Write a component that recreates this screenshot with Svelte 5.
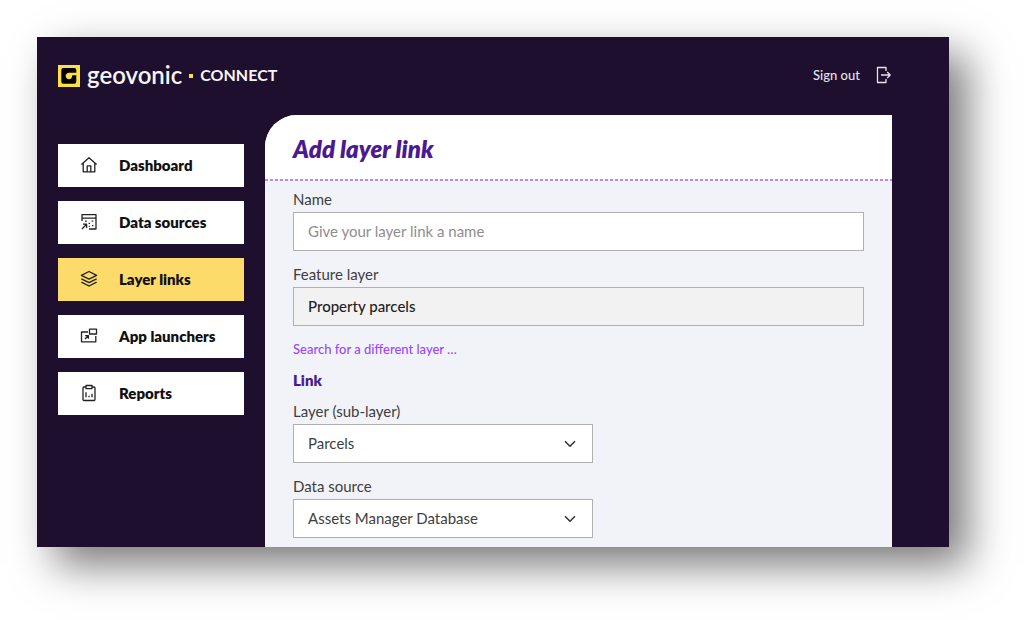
<script>
  const navItems = [
    { label: 'Dashboard', icon: 'home' },
    { label: 'Data sources', icon: 'data' },
    { label: 'Layer links', icon: 'layers' },
    { label: 'App launchers', icon: 'launch' },
    { label: 'Reports', icon: 'report' }
  ];

  let active = $state('Layer links');
  let name = $state('');
  let layer = $state('Parcels');
  let source = $state('Assets Manager Database');
</script>

<div class="page">
  <div class="window">
    <header>
      <a class="brand" href="#home">
        <svg class="logo" viewBox="0 0 22 22" aria-hidden="true">
          <rect width="22" height="22" fill="#fbe243" />
          <path d="M5.3 3H16.3Q18.3 3 18.3 5V16.7Q18.3 18.7 16.3 18.7H5.3Q3.3 18.7 3.3 16.7V5Q3.3 3 5.3 3Z" fill="#050308" />
          <path d="M19 7.7H11.2C9 7.7 7.7 9.2 7.7 11C7.7 12.9 9.2 14.3 11 14.3C12.9 14.3 14.2 12.8 14.2 10.3H19Z" fill="#fbe243" />
        </svg>
        <span class="word">geovonic</span>
        <span class="dot"></span>
        <span class="product">CONNECT</span>
      </a>
      <button class="signout" type="button">
        Sign out
        <svg viewBox="0 0 16 18" aria-hidden="true">
          <path d="M10 5V1.5H1.5V16.5H10V13M5 9H14.2M11.2 6L14.2 9L11.2 12" />
        </svg>
      </button>
    </header>

    <div class="body">
      <nav aria-label="Main">
        {#each navItems as item}
          <a
            href="#{item.icon}"
            class:active={active === item.label}
            aria-current={active === item.label ? 'page' : undefined}
            onclick={() => (active = item.label)}
          >
            <svg viewBox="0 0 18 18" aria-hidden="true">
              {#if item.icon === 'home'}
                <path d="M1.4 8.6L9 1.8L16.6 8.6M3.2 7.2V15.8H14.8V7.2M7.2 15.8V9.9H10.8V15.8" />
              {:else if item.icon === 'data'}
                <path d="M2 8V1.6H16V16H9M2 5.2H16M2 16L6.4 11.4M3 11.2H6.6V15" />
                <path d="M5 8.2H6.8M11.6 8.2H13.2M8.6 10.4H10M12 12.6H13.4M8.8 13.4H9.8" />
              {:else if item.icon === 'layers'}
                <path d="M9 1.5L16.6 5.3L9 9.1L1.4 5.3ZM1.4 8.8L9 12.6L16.6 8.8M1.4 12.2L9 16L16.6 12.2" />
              {:else if item.icon === 'launch'}
                <path d="M8 5H1.5V14.8H15.8V9M9.5 2.2H16.5V7H9.5ZM5 12L8.2 8.8M5.2 8.6H8.4V11.8" />
              {:else}
                <path d="M6 3H4Q3 3 3 4V15.5Q3 16.5 4 16.5H14Q15 16.5 15 15.5V4Q15 3 14 3H12M6 1.5H12V4.6H6ZM6 8.2V13.2M9 11.8V13.2M12 9.8V13.2" />
              {/if}
            </svg>
            {item.label}
          </a>
        {/each}
      </nav>

      <main>
        <div class="title">
          <h1>Add layer link</h1>
        </div>
        <form onsubmit={(e) => e.preventDefault()}>
          <div class="field">
            <label for="name">Name</label>
            <input id="name" type="text" placeholder="Give your layer link a name" bind:value={name} />
          </div>
          <div class="field">
            <label for="feature">Feature layer</label>
            <input id="feature" type="text" value="Property parcels" readonly />
          </div>
          <a class="search" href="#search">Search for a different layer …</a>
          <h2>Link</h2>
          <div class="field half">
            <label for="layer">Layer (sub-layer)</label>
            <div class="select">
              <select id="layer" bind:value={layer}>
                <option>Parcels</option>
              </select>
              <svg viewBox="0 0 12 8" aria-hidden="true"><path d="M1 1.2L6 6.2L11 1.2" /></svg>
            </div>
          </div>
          <div class="field half">
            <label for="source">Data source</label>
            <div class="select">
              <select id="source" bind:value={source}>
                <option>Assets Manager Database</option>
              </select>
              <svg viewBox="0 0 12 8" aria-hidden="true"><path d="M1 1.2L6 6.2L11 1.2" /></svg>
            </div>
          </div>
        </form>
      </main>
    </div>
  </div>
</div>

<style>
  :global(body) {
    background: #fff;
  }

  .page {
    padding: 37px 75px 73px 37px;
    font-family: Lato, 'Liberation Sans', sans-serif;
    font-size: 15px;
    color: #3e3e42;
  }

  .page,
  .page * {
    box-sizing: border-box;
  }

  .window {
    background: #1e0f2e;
    box-shadow: 18px 18px 40px rgba(0, 0, 0, 0.53);
  }

  header {
    display: flex;
    align-items: center;
    justify-content: space-between;
    height: 78px;
    padding: 0 57px 0 21px;
  }

  .brand {
    display: flex;
    align-items: center;
    color: #f6f4f8;
    text-decoration: none;
  }

  .logo {
    width: 22px;
    height: 22px;
    margin-right: 7px;
  }

  .word,
  .product {
    padding-bottom: 2px;
    line-height: 24px;
  }

  .word {
    font-size: 24px;
    font-weight: 600;
  }

  .dot {
    width: 4px;
    height: 4px;
    margin: 0 7px;
    background: #fbe243;
  }

  .product {
    font-size: 16px;
    font-weight: 700;
  }

  .signout {
    display: flex;
    align-items: center;
    gap: 16px;
    padding: 0 0 2px;
    border: 0;
    background: none;
    color: #e6e2ea;
    font: inherit;
    font-size: 13px;
    font-weight: 500;
    cursor: pointer;
  }

  .signout svg {
    width: 16px;
    height: 18px;
  }

  svg path {
    stroke-linejoin: round;
  }

  .signout path {
    fill: none;
    stroke: #e6e2ea;
    stroke-width: 1.3;
  }

  .body {
    display: flex;
    gap: 21px;
    padding: 0 57px 0 21px;
  }

  nav {
    display: flex;
    flex: 0 0 186px;
    flex-direction: column;
    gap: 14px;
    padding-top: 29px;
  }

  nav a {
    display: flex;
    align-items: center;
    gap: 21px;
    height: 43px;
    padding: 0 0 2px 22px;
    background: #fff;
    color: #111;
    font-weight: 800;
    text-decoration: none;
  }

  nav a.active {
    background: #fcdb6a;
  }

  nav svg {
    width: 18px;
    height: 18px;
  }

  nav path {
    fill: none;
    stroke: #222;
    stroke-width: 1.3;
  }

  main {
    flex: 1;
    min-width: 0;
    overflow: hidden;
    border-radius: 32px 0 0 0;
    background: #f2f3f8;
  }

  .title {
    padding: 19px 28px 17px;
    background:
      repeating-linear-gradient(90deg, #b48cee 0 3px, #f2f3f8 3px 5px) bottom / 100% 2px no-repeat,
      #fff;
  }

  h1 {
    margin: 0;
    color: #4b1a91;
    font-size: 24px;
    font-style: italic;
    font-weight: 800;
    line-height: 30px;
  }

  form {
    display: flex;
    flex-direction: column;
    gap: 12px;
    padding: 7px 28px 9px;
  }

  .field {
    display: flex;
    flex-direction: column;
    gap: 2px;
  }

  .half {
    width: 300px;
    max-width: 100%;
  }

  label {
    line-height: 22px;
  }

  input,
  select {
    width: 100%;
    height: 39px;
    padding: 0 14px 2px;
    border: 1px solid #b0b0b0;
    border-radius: 0;
    background: #fff;
    color: #3e3e42;
    font: inherit;
  }

  input::placeholder {
    color: #8e8e8e;
    opacity: 1;
  }

  input[readonly] {
    background: #f2f2f2;
    color: #222;
    font-weight: 500;
  }

  .search {
    align-self: flex-start;
    color: #9747ff;
    font-size: 13px;
    font-weight: 500;
    line-height: 22px;
    text-decoration: none;
  }

  h2 {
    margin: 0;
    color: #4b1a91;
    font-size: 15px;
    font-weight: 800;
    line-height: 16px;
  }

  .select {
    display: grid;
    align-items: center;
  }

  .select > * {
    grid-area: 1 / 1;
  }

  select {
    appearance: none;
  }

  .select svg {
    width: 12px;
    height: 8px;
    margin-right: 17px;
    justify-self: end;
    pointer-events: none;
  }

  .select path {
    fill: none;
    stroke: #333;
    stroke-width: 1.5;
  }
</style>
